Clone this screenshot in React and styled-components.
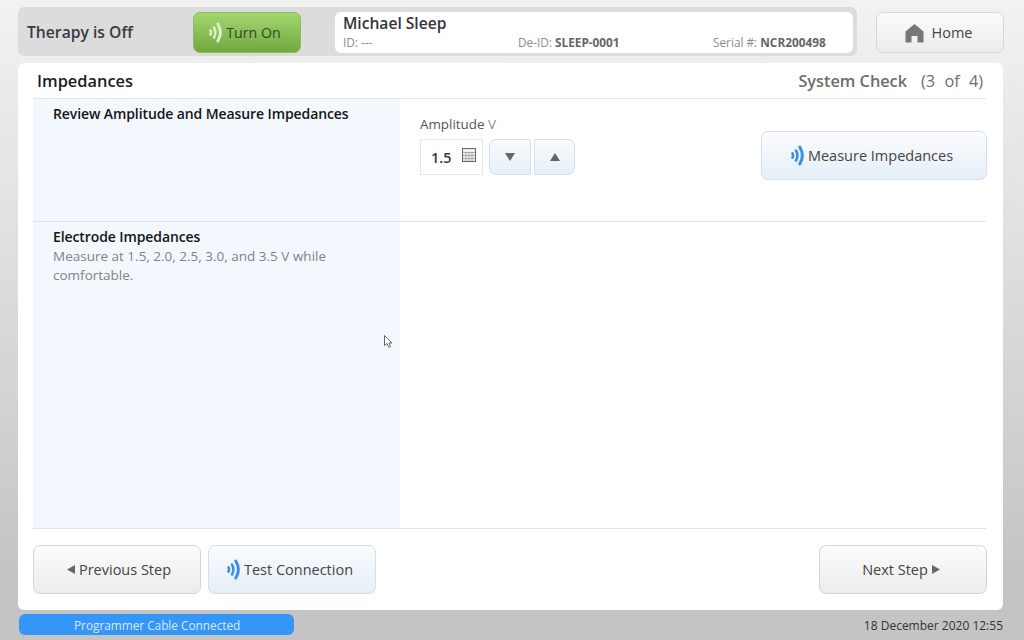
import React from "react";
import styled, { createGlobalStyle } from "styled-components";

const Global = createGlobalStyle`
  html, body { margin: 0; padding: 0; }
  body { font-family: "Open Sans", "Noto Sans", sans-serif; color: #333; }
`;

const Page = styled.div`
  position: relative;
  width: 1024px;
  height: 640px;
  overflow: hidden;
  box-sizing: border-box;
  padding: 7px 20px 4px 18px;
  display: flex;
  flex-direction: column;
  background: linear-gradient(#f2f2f2 0%, #dcdcdc 45%, #c4c4c4 90%, #c4c4c4 100%);
`;

const Header = styled.div`
  display: flex;
  gap: 19px;
  height: 49px;
`;

const TherapyBar = styled.div`
  width: 839px;
  box-sizing: border-box;
  padding: 5px 4px 3px 9px;
  display: flex;
  background: #dcdcdc;
  border-radius: 6px;
`;

const TherapyLabel = styled.div`
  width: 166px;
  font-size: 15.7px;
  font-weight: 600;
  line-height: 40px;
  color: #3a3a42;
`;

const Btn = styled.button`
  box-sizing: border-box;
  width: ${p => p.$w || 168}px;
  height: ${p => p.$h || 49}px;
  padding: 0 ${p => p.$pr || 0}px 0 ${p => p.$pl || 0}px;
  display: flex;
  align-items: center;
  justify-content: center;
  gap: 4px;
  font: 400 14.5px "Open Sans", sans-serif;
  color: #444;
  border-radius: 7px;
  border: 1px solid ${p => (p.$blue ? "#d3dfec" : "#d6d6d6")};
  background: ${p => p.$blue
    ? "linear-gradient(#fafcfe, #e6eef7)"
    : "linear-gradient(#fbfbfb, #ececec)"};
`;

const TurnOnBtn = styled(Btn)`
  border: 1px solid #8dbb5e;
  background: linear-gradient(#a4d670, #71a83e);
  color: #33452a;
  font-size: 14.2px;
`;

const HomeBtn = styled(Btn)`
  height: 41px;
  margin-top: 5px;
  gap: 8px;
`;

const PatientCard = styled.div`
  width: 518px;
  margin-left: 34px;
  box-sizing: border-box;
  padding: 0 8px;
  background: #fff;
  border-radius: 6px;
`;

const PatientName = styled.div`
  font-size: 15.6px;
  font-weight: 600;
  line-height: 22px;
  color: #34343c;
`;

const PatientMeta = styled.div`
  display: grid;
  grid-template-columns: 175px 195px auto;
  font-size: 11.8px;
  line-height: 16px;
  color: #8c8c8c;
  b {
    font-weight: 700;
    color: #666;
  }
`;

const Card = styled.div`
  margin-top: 7px;
  width: 985px;
  height: 547px;
  box-sizing: border-box;
  padding: 0 17px 0 15px;
  display: flex;
  flex-direction: column;
  background: #fff;
  border-radius: 6px;
`;

const TitleRow = styled.div`
  height: 36px;
  flex: none;
  box-sizing: border-box;
  padding: 0 3px 0 4px;
  display: flex;
  align-items: center;
  justify-content: space-between;
  border-bottom: 1px solid #e3e3e3;
`;

const Title = styled.div`
  font-size: 16.4px;
  font-weight: 600;
  color: #1c1c1c;
`;

const StepInfo = styled.div`
  font-size: 16.3px;
  font-weight: 600;
  color: #6e6e6e;
  span {
    font-weight: 400;
    word-spacing: 5px;
    margin-left: 14px;
  }
`;

const Row = styled.div`
  display: flex;
  height: ${p => p.$h}px;
  flex: none;
  border-bottom: 1px solid #dfe1e3;
`;

const Side = styled.div`
  width: 367px;
  flex: none;
  box-sizing: border-box;
  padding: 5px 20px 0;
  background: #f3f8ff;
`;

const SideHeading = styled.div`
  font-size: 14px;
  font-weight: 600;
  line-height: 20px;
  color: #151515;
  letter-spacing: -0.1px;
`;

const SideText = styled.div`
  font-size: 13.5px;
  line-height: 18.5px;
  color: #828282;
`;

const ReviewBody = styled.div`
  flex: 1;
  padding: 15px 0 0 20px;
  display: flex;
  justify-content: space-between;
  align-items: flex-start;
`;

const AmpLabel = styled.div`
  font-size: 13.4px;
  line-height: 20px;
  color: #555;
  span {
    color: #8a8a8a;
  }
`;

const AmpControls = styled.div`
  margin-top: 5px;
  display: flex;
  gap: 6px;
`;

const AmpInput = styled.div`
  box-sizing: border-box;
  width: 63px;
  height: 36px;
  padding: 7px 6px 0 10px;
  display: flex;
  justify-content: space-between;
  align-items: flex-start;
  border: 1px solid #e6e6e6;
  font-size: 14.4px;
  font-weight: 600;
  line-height: 21px;
  color: #333a40;
  svg {
    margin-top: 1px;
  }
`;

const StepBtns = styled.div`
  display: flex;
  gap: 3px;
`;

const ArrowBtn = styled(Btn)`
  width: ${p => (p.$left ? 42 : 41)}px;
  height: 36px;
  border-radius: ${p => (p.$left ? "7px 2px 2px 7px" : "2px 7px 7px 2px")};
`;

const MeasureBtn = styled(Btn)`
  width: 226px;
  margin-top: 17px;
  margin-right: -1px;
`;

const Footer = styled.div`
  flex: 1;
  padding-top: 16px;
  margin-right: -1px;
  display: flex;
  align-items: flex-start;
  gap: 7px;
`;

const Spacer = styled.div`
  flex: 1;
`;

const StatusRow = styled.div`
  margin-top: 3px;
  display: flex;
  align-items: center;
  justify-content: space-between;
  height: 22px;
  padding-left: 1px;
`;

const StatusPill = styled.div`
  width: 275px;
  height: 21px;
  box-sizing: border-box;
  padding-left: 55px;
  line-height: 22px;
  font-size: 11.8px;
  color: #d8eafc;
  background: #3496f6;
  border-radius: 6px;
`;

const DateText = styled.div`
  font-size: 12px;
  color: #333;
  margin-top: 3px;
  margin-right: 1px;
`;

const Cursor = styled.svg`
  position: absolute;
  left: 384px;
  top: 335px;
`;

const Waves = ({ color = "#3a90e6" }) => (
  <svg width="13" height="21" viewBox="0 0 13 21" fill="none" stroke={color} strokeLinecap="round">
    <path d="M1.5 8.3c.8 1.5.8 2.9 0 4.4" strokeWidth="2.6" />
    <path d="M5 5.5c1.8 3.2 1.8 6.8 0 10" strokeWidth="2.6" />
    <path d="M8.8 2c3.2 5.3 3.2 11.7 0 17" strokeWidth="3" />
  </svg>
);

const Triangle = ({ dir }) => {
  const pts = { left: "8,0 8,9 0,4.5", right: "0,0 0,9 8,4.5", down: "0,0 10,0 5,8", up: "0,8 10,8 5,0" };
  const w = dir === "left" || dir === "right" ? 8 : 10;
  const h = dir === "left" || dir === "right" ? 9 : 8;
  return (
    <svg width={w} height={h} viewBox={`0 0 ${w} ${h}`}>
      <polygon points={pts[dir]} fill="#666" />
    </svg>
  );
};

const HomeIcon = () => (
  <svg width="19" height="20" viewBox="0 0 19 20">
    <path d="M9.5 1 18.5 8.5V19.5H12.5V13H6.5V19.5H0.5V8.5Z" fill="#777" />
  </svg>
);

const CalcIcon = () => (
  <svg width="14" height="14" viewBox="0 0 14 14">
    <rect x="0.5" y="0.5" width="13" height="13" fill="#eee" stroke="#666" />
    <path d="M1 4.5H13M1 7.5H13M1 10.5H13M4 4V13M7 4V13M10 4V13" stroke="#aaa" strokeWidth="1" />
  </svg>
);

export default function App() {
  return (
    <Page>
      <Global />
      <Header>
        <TherapyBar>
          <TherapyLabel>Therapy is Off</TherapyLabel>
          <TurnOnBtn $w={108} $h={41} $pr={4}>
            <Waves color="#dcefc4" />
            Turn On
          </TurnOnBtn>
          <PatientCard>
            <PatientName>Michael Sleep</PatientName>
            <PatientMeta>
              <div>ID: ---</div>
              <div>De-ID: <b>SLEEP-0001</b></div>
              <div>Serial #: <b>NCR200498</b></div>
            </PatientMeta>
          </PatientCard>
        </TherapyBar>
        <HomeBtn $w={128} $pr={3}>
          <HomeIcon />
          Home
        </HomeBtn>
      </Header>

      <Card>
        <TitleRow>
          <Title>Impedances</Title>
          <StepInfo>System Check<span>(3 of 4)</span></StepInfo>
        </TitleRow>
        <Row $h={122}>
          <Side>
            <SideHeading>Review Amplitude and Measure Impedances</SideHeading>
          </Side>
          <ReviewBody>
            <div>
              <AmpLabel>Amplitude <span>V</span></AmpLabel>
              <AmpControls>
                <AmpInput>1.5 <CalcIcon /></AmpInput>
                <StepBtns>
                  <ArrowBtn $blue $left><Triangle dir="down" /></ArrowBtn>
                  <ArrowBtn $blue><Triangle dir="up" /></ArrowBtn>
                </StepBtns>
              </AmpControls>
            </div>
            <MeasureBtn $blue $pr={4}>
              <Waves />
              Measure Impedances
            </MeasureBtn>
          </ReviewBody>
        </Row>
        <Row $h={306}>
          <Side>
            <SideHeading>Electrode Impedances</SideHeading>
            <SideText>Measure at 1.5, 2.0, 2.5, 3.0, and 3.5 V while comfortable.</SideText>
          </Side>
        </Row>
        <Footer>
          <Btn $pl={4}>
            <Triangle dir="left" />
            Previous Step
          </Btn>
          <Btn $blue $pr={4}>
            <Waves />
            Test Connection
          </Btn>
          <Spacer />
          <Btn $pr={4}>
            Next Step
            <Triangle dir="right" />
          </Btn>
        </Footer>
      </Card>

      <StatusRow>
        <StatusPill>Programmer Cable Connected</StatusPill>
        <DateText>18 December 2020 12:55</DateText>
      </StatusRow>

      <Cursor width="9" height="14" viewBox="0 0 9 14">
        <path d="M0.5 0.5V10.5L3 8.5L5 12.5L6.5 11.5L5 8H8Z" fill="#fff" stroke="#666" strokeWidth="1" />
      </Cursor>
    </Page>
  );
}
